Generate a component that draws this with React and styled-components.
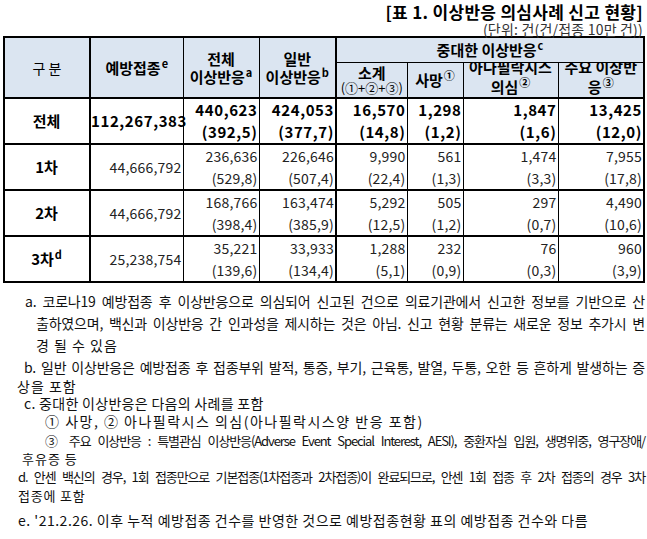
import styled, { createGlobalStyle } from "styled-components";

const GlobalStyle = createGlobalStyle`
  body {
    margin: 0;
    background: #ffffff;
    font-family: "Noto Sans CJK KR", "Noto Sans", sans-serif;
    color: #000;
  }
`;

const Page = styled.div`
  width: 647px;
  height: 539px;
  padding: 0 0 0 3px;
  box-sizing: border-box;
  overflow: hidden;
`;

const TitleBlock = styled.div`
  display: flex;
  flex-direction: column;
  align-items: flex-end;
  padding-right: 4px;
  height: 36px;
  box-sizing: border-box;
  padding-top: 3px;
`;

const Title = styled.div`
  font-size: 17px;
  font-weight: 700;
  line-height: 18px;
  letter-spacing: 0.3px;
`;

const Unit = styled.div`
  font-size: 14px;
  line-height: 14px;
  margin-top: 1px;
  color: #333;
  letter-spacing: 0.2px;
`;

const Table = styled.table`
  border-collapse: collapse;
  table-layout: fixed;
  width: 640px;
  border: 2px solid #000;
`;

const Th = styled.th`
  background: #dbe5f1;
  border: 1px solid #000;
  border-left-width: ${(p) => (p.$thickLeft ? "2px" : "1px")};
  border-bottom-width: ${(p) => (p.$thickBottom ? "2px" : "1px")};
  height: ${(p) => p.$h || 24}px;
  padding: 0;
  font-size: ${(p) => (p.$light ? "14px" : "15px")};
  font-weight: ${(p) => (p.$light ? 400 : 700)};
  line-height: ${(p) => (p.$tight ? "16px" : "18px")};
  text-align: center;
  vertical-align: middle;
  white-space: nowrap;
  overflow: hidden;
`;

const Sup = styled.sup`
  font-size: 11px;
  font-weight: 700;
  vertical-align: 6px;
  line-height: 0;
  margin-left: 1px;
`;

const Small = styled.div`
  font-size: 13px;
  font-weight: 400;
  line-height: 14px;
  letter-spacing: 0;
`;

const Clip = styled.div`
  height: 34px;
  overflow: hidden;
  display: flex;
  flex-direction: column;
  justify-content: flex-end;
  line-height: 20px;
`;

const Td = styled.td`
  border: 1px solid #000;
  border-left-width: ${(p) => (p.$thickLeft ? "2px" : "1px")};
  border-top-width: 2px;
  border-bottom-width: 2px;
  height: 44px;
  padding: 0 1px 0 0;
  text-align: ${(p) => (p.$center ? "center" : "right")};
  vertical-align: middle;
  font-size: ${(p) => (p.$bold ? "15px" : "14px")};
  font-weight: ${(p) => (p.$bold ? 700 : 400)};
  color: ${(p) => (p.$bold ? "#000" : "#222")};
  line-height: 22px;
  white-space: nowrap;
  letter-spacing: ${(p) => (p.$bold ? "0.6px" : "0.2px")};
`;

const RowLabel = styled(Td)`
  font-weight: 700;
  font-size: 15px;
  letter-spacing: 0;
  color: #000;
`;

const Notes = styled.div`
  margin-top: 7px;
  width: 642px;
  color: #111;
`;

const NoteLine = styled.div`
  height: ${(p) => p.$h}px;
  line-height: ${(p) => p.$h}px;
  padding-left: ${(p) => p.$indent - 3}px;
  text-align: ${(p) => (p.$justify ? "justify" : "left")};
  text-align-last: ${(p) => (p.$justify ? "justify" : "left")};
  letter-spacing: ${(p) => (p.$ls !== undefined ? p.$ls : p.$condensed ? -1.1 : -0.2)}px;
  font-size: ${(p) => (p.$condensed ? "13px" : "14px")};
  white-space: ${(p) => (p.$justify ? "normal" : "nowrap")};
`;

const rows = [
  { label: "전체", bold: true, vals: [["112,267,383"], ["440,623", "(392,5)"], ["424,053", "(377,7)"], ["16,570", "(14,8)"], ["1,298", "(1,2)"], ["1,847", "(1,6)"], ["13,425", "(12,0)"]] },
  { label: "1차", vals: [["44,666,792"], ["236,636", "(529,8)"], ["226,646", "(507,4)"], ["9,990", "(22,4)"], ["561", "(1,3)"], ["1,474", "(3,3)"], ["7,955", "(17,8)"]] },
  { label: "2차", vals: [["44,666,792"], ["168,766", "(398,4)"], ["163,474", "(385,9)"], ["5,292", "(12,5)"], ["505", "(1,2)"], ["297", "(0,7)"], ["4,490", "(10,6)"]] },
  { label: "3차", sup: "d", vals: [["25,238,754"], ["35,221", "(139,6)"], ["33,933", "(134,4)"], ["1,288", "(5,1)"], ["232", "(0,9)"], ["76", "(0,3)"], ["960", "(3,9)"]] },
];

const notes = [
  { t: "a. 코로나19 예방접종 후 이상반응으로 의심되어 신고된 건으로 의료기관에서 신고한 정보를 기반으로 산", indent: 25, justify: true, h: 22 },
  { t: "출하였으며, 백신과 이상반응 간 인과성을 제시하는 것은 아님. 신고 현황 분류는 새로운 정보 추가시 변", indent: 36, justify: true, h: 22 },
  { t: "경 될 수 있음", indent: 36, h: 22, ls: 1 },
  { t: "b. 일반 이상반응은 예방접종 후 접종부위 발적, 통증, 부기, 근육통, 발열, 두통, 오한 등 흔하게 발생하는 증", indent: 24, justify: true, h: 22 },
  { t: "상을 포함", indent: 17, h: 16, ls: 1 },
  { t: "c. 중대한 이상반응은 다음의 사례를 포함", indent: 24, h: 18, ls: 0.3 },
  { t: "① 사망, ② 아나필락시스 의심(아나필락시스양 반응 포함)", indent: 45, h: 19, ls: 1.5 },
  { t: "③ 주요 이상반응 : 특별관심 이상반응(Adverse Event Special Interest, AESI), 중환자실 입원, 생명위중, 영구장애/", indent: 45, justify: true, condensed: true, h: 19 },
  { t: "후유증 등", indent: 22, condensed: true, h: 18, ls: 1 },
  { t: "d. 안센 백신의 경우, 1회 접종만으로 기본접종(1차접종과 2차접종)이 완료되므로, 안센 1회 접종 후 2차 접종의 경우 3차", indent: 18, justify: true, condensed: true, h: 18 },
  { t: "접종에 포함", indent: 18, condensed: true, h: 20, ls: 0.8 },
  { t: "e. '21.2.26. 이후 누적 예방접종 건수를 반영한 것으로 예방접종현황 표의 예방접종 건수와 다름", indent: 18, h: 28, ls: 0.5 },
];

const widths = [86, 93, 76, 77, 71, 56, 95, 86];

export default function App() {
  return (
    <Page>
      <GlobalStyle />
      <TitleBlock>
        <Title>[표 1. 이상반응 의심사례 신고 현황]</Title>
        <Unit>(단위: 건(건/접종 10만 건))</Unit>
      </TitleBlock>
      <Table>
        <colgroup>
          {widths.map((w, i) => (
            <col key={i} style={{ width: w }} />
          ))}
        </colgroup>
        <thead>
          <tr>
            <Th rowSpan={2} $light $thickBottom>
              구 분
            </Th>
            <Th rowSpan={2} $thickLeft $thickBottom>
              예방접종<Sup>e</Sup>
            </Th>
            <Th rowSpan={2} $thickBottom>
              전체
              <br />
              이상반응<Sup>a</Sup>
            </Th>
            <Th rowSpan={2} $thickBottom>
              일반
              <br />
              이상반응<Sup>b</Sup>
            </Th>
            <Th colSpan={4} $thickLeft $h={24}>
              중대한 이상반응<Sup>c</Sup>
            </Th>
          </tr>
          <tr>
            <Th $thickLeft $thickBottom $tight $h={34}>
              소계
              <Small>(①+②+③)</Small>
            </Th>
            <Th $thickBottom $h={34}>
              사망<Sup>①</Sup>
            </Th>
            <Th $thickBottom $h={34}>
              <Clip>
                <div>아나필락시스</div>
                <div>
                  의심<Sup>②</Sup>
                </div>
              </Clip>
            </Th>
            <Th $thickBottom $h={34}>
              <Clip>
                <div>주요 이상반</div>
                <div>
                  응<Sup>③</Sup>
                </div>
              </Clip>
            </Th>
          </tr>
        </thead>
        <tbody>
          {rows.map((r) => (
            <tr key={r.label}>
              <RowLabel $center>
                {r.label}
                {r.sup && <Sup>{r.sup}</Sup>}
              </RowLabel>
              {r.vals.map((v, i) => (
                <Td key={i} $bold={r.bold} $thickLeft={i === 0 || i === 3}>
                  {v.map((line, j) => (
                    <div key={j}>{line}</div>
                  ))}
                </Td>
              ))}
            </tr>
          ))}
        </tbody>
      </Table>
      <Notes>
        {notes.map((n, i) => (
          <NoteLine key={i} $indent={n.indent} $justify={n.justify} $condensed={n.condensed} $h={n.h} $ls={n.ls}>
            {n.t}
          </NoteLine>
        ))}
      </Notes>
    </Page>
  );
}
